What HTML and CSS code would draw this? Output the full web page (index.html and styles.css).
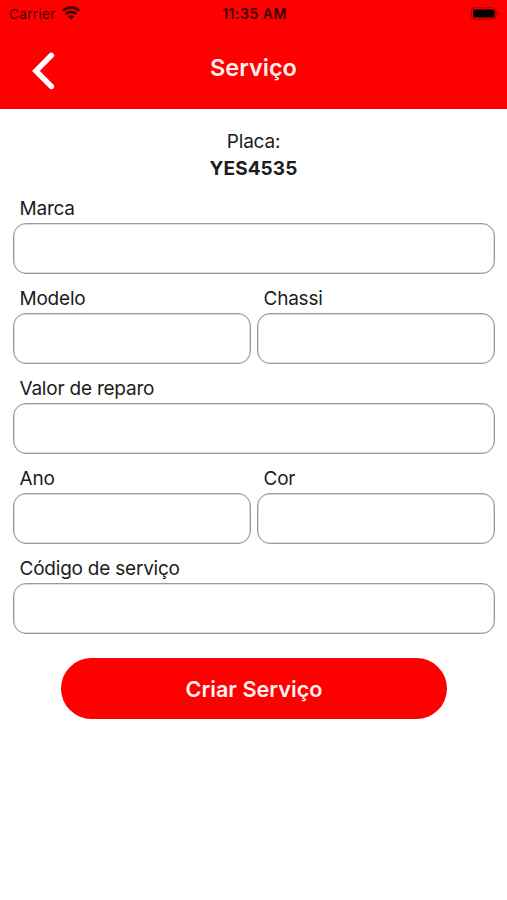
FILE: index.html
```html
<!DOCTYPE html>
<html lang="pt-BR">

<head>
    <meta charset="UTF-8">
    <meta name="viewport" content="width=device-width, initial-scale=1.0">
    <title>Serviço</title>
    <link rel="stylesheet" href="styles.css">
</head>

<body>
    <header class="header">
        <div class="status-bar">
            <div class="carrier">
                <span>Carrier</span>
                <svg class="wifi" viewBox="0 0 18 14" width="18" height="14">
                    <path d="M0.8 4.9a11.6 11.6 0 0 1 16.4 0M3.6 8.1a7.6 7.6 0 0 1 10.8 0" fill="none" stroke="currentColor" stroke-width="2.6" />
                    <path d="M9 13.6L5.9 10.6a4.4 4.4 0 0 1 6.2 0z" fill="currentColor" />
                </svg>
            </div>
            <span class="time">11:35 AM</span>
            <div class="status-right">
                <svg class="battery" viewBox="0 0 30 14" width="30" height="14">
                    <rect x="1.5" y="0.8" width="24.4" height="11.4" rx="3" fill="none" stroke="#a00000" stroke-width="1" />
                    <rect x="3" y="2.5" width="21.5" height="8" rx="1.5" fill="#000" />
                    <path d="M27.5 4.5c2 .8 2 3.2 0 4z" fill="#a00000" />
                </svg>
            </div>
        </div>
        <div class="nav-bar">
            <button type="button" class="back" aria-label="Voltar">
                <svg viewBox="0 0 24 40" width="24" height="40">
                    <path d="M19.3 4.4L4 19.9L19.3 35.4" fill="none" stroke="#fff" stroke-width="5.6" stroke-linecap="round" />
                </svg>
            </button>
            <h1>Serviço</h1>
        </div>
    </header>

    <div class="plate">
        <span>Placa:</span>
        <strong>YES4535</strong>
    </div>

    <form class="service-form">
        <div class="field full">
            <label for="marca">Marca</label>
            <input type="text" id="marca">
        </div>
        <div class="field">
            <label for="modelo">Modelo</label>
            <input type="text" id="modelo">
        </div>
        <div class="field">
            <label for="chassi">Chassi</label>
            <input type="text" id="chassi">
        </div>
        <div class="field full">
            <label for="valor">Valor de reparo</label>
            <input type="text" id="valor">
        </div>
        <div class="field">
            <label for="ano">Ano</label>
            <input type="text" id="ano">
        </div>
        <div class="field">
            <label for="cor">Cor</label>
            <input type="text" id="cor">
        </div>
        <div class="field full">
            <label for="codigo">Código de serviço</label>
            <input type="text" id="codigo">
        </div>
        <button type="submit" class="submit">Criar Serviço</button>
    </form>
</body>

</html>
```
FILE: styles.css
```css
* {
    box-sizing: border-box;
}

body {
    font-family: Inter, "Liberation Sans", sans-serif;
    margin: 0;
    background-color: #fff;
    color: #1c1c1c;
}

.header {
    height: 109px;
    background-color: #ff0000;
}

.status-bar {
    display: grid;
    grid-template-columns: 1fr auto 1fr;
    align-items: center;
    height: 27px;
    padding: 0 7px 0 9px;
    font-size: 13.5px;
    color: #3c0000;
}

.carrier {
    display: flex;
    align-items: center;
    gap: 6px;
    letter-spacing: 0.35px;
}

.wifi {
    margin-top: -2px;
}

.time {
    font-size: 14px;
    font-weight: 600;
    letter-spacing: 0.5px;
}

.status-right {
    display: flex;
    justify-content: flex-end;
}

.nav-bar {
    display: grid;
    grid-template-columns: 80px 1fr 80px;
    align-items: center;
    height: 82px;
}

.nav-bar h1 {
    margin: 0;
    font-size: 23.5px;
    font-weight: 600;
    line-height: 28px;
    text-align: center;
    color: #fff0f0;
}

.back {
    display: flex;
    margin: 6px 0 0 32px;
    padding: 0;
    background: none;
    border: none;
    cursor: pointer;
}

.plate {
    display: flex;
    flex-direction: column;
    align-items: center;
    padding-top: 18.5px;
    font-size: 19px;
    line-height: 27px;
}

.plate span {
    letter-spacing: -0.2px;
}

.plate strong {
    font-weight: 700;
    letter-spacing: 0.1px;
}

.service-form {
    display: grid;
    grid-template-columns: 1fr 1fr;
    column-gap: 6px;
    padding: 2.5px 12px 0 13px;
}

.full {
    grid-column: 1 / -1;
}

.field label {
    display: block;
    height: 39px;
    padding: 11px 6.5px 0;
    font-size: 19px;
    line-height: 27px;
    letter-spacing: -0.22px;
}

.field input {
    display: block;
    width: 100%;
    height: 51px;
    padding: 0 12px;
    font: inherit;
    border: 1px solid #999;
    border-radius: 13px;
    background: #fff;
    box-shadow: inset 0 0 0 0.5px #bbb;
}

.submit {
    grid-column: 1 / -1;
    justify-self: center;
    width: 386px;
    height: 61px;
    margin-top: 24px;
    padding: 1px 6px;
    font-family: inherit;
    font-size: 21.7px;
    font-weight: 600;
    color: #fff0f0;
    background-color: #ff0000;
    border: none;
    border-radius: 31px;
    cursor: pointer;
}
```
